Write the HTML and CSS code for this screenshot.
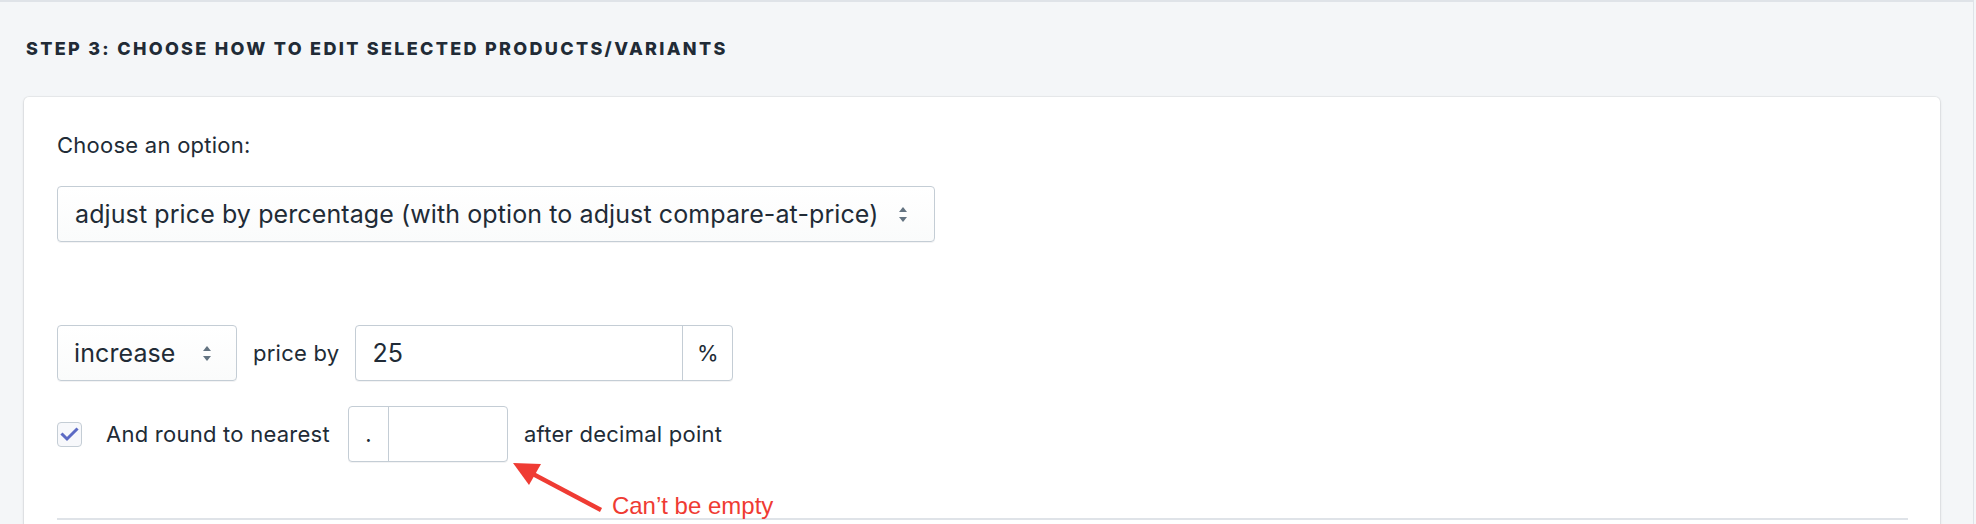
FILE: index.html
```html
<!DOCTYPE html>
<html lang="en">
<head>
<meta charset="utf-8">
<title>Step 3</title>
<link rel="stylesheet" href="styles.css">
</head>
<body>
<div class="page">
  <h2 class="step-title">STEP 3: CHOOSE HOW TO EDIT SELECTED PRODUCTS/VARIANTS</h2>
  <section class="card">
    <label class="field-label">Choose an option:</label>
    <div class="select select-wide">
      <span class="select-text">adjust price by percentage (with option to adjust compare-at-price)</span>
      <svg class="select-arrows" width="8" height="15" viewBox="0 0 8 15"><polygon points="0,5 4,0 8,5"/><polygon points="0,10 8,10 4,15"/></svg>
    </div>

    <div class="row row-price">
      <div class="select select-small">
        <span class="select-text">increase</span>
        <svg class="select-arrows" width="8" height="15" viewBox="0 0 8 15"><polygon points="0,5 4,0 8,5"/><polygon points="0,10 8,10 4,15"/></svg>
      </div>
      <span class="inline-text">price by</span>
      <div class="input-group input-percent">
        <span class="input-value">25</span>
        <span class="addon addon-right">%</span>
      </div>
    </div>

    <div class="row row-round">
      <span class="checkbox">
        <svg width="25" height="25" viewBox="0 0 25 25"><polyline points="5.5,12.5 10,17 19.5,7.5" fill="none" stroke="#5c6ac4" stroke-width="3" stroke-linecap="square"/></svg>
      </span>
      <span class="inline-text">And round to nearest</span>
      <div class="round-wrap">
        <div class="input-group input-round">
          <span class="addon addon-left">.</span>
          <span class="input-value"></span>
        </div>
        <svg class="annot-arrow" width="100" height="60" viewBox="0 0 100 60">
          <line x1="25" y1="18" x2="93" y2="54" stroke="#ef3b33" stroke-width="4.5"/>
          <polygon points="5,7 33,8 21,29" fill="#ef3b33"/>
        </svg>
        <span class="annot-text">Can’t be empty</span>
      </div>
      <span class="inline-text">after decimal point</span>
    </div>

    <hr class="divider">
  </section>
</div>
</body>
</html>
```

FILE: styles.css
```css
* { box-sizing: border-box; }

html, body {
  margin: 0;
  padding: 0;
  background: #f4f6f8;
}

body {
  font-family: Inter, "Noto Sans", "Liberation Sans", sans-serif;
  color: #212b36;
  overflow: hidden;
}

.page {
  width: 1974px;
  min-height: 600px;
  border-top: 2px solid #dfe3e8;
  border-right: 1px solid #dfe3e8;
  padding: 35px 33px 0 24px;
}

.step-title {
  margin: 0 0 36px 2px;
  font-size: 18px;
  line-height: 24px;
  font-weight: 800;
  letter-spacing: 2.3px;
  color: #212b36;
}

.card {
  background: #fff;
  border-radius: 5px;
  box-shadow: 0 0 0 1px rgba(63, 63, 68, 0.05), 0 1px 3px 0 rgba(63, 63, 68, 0.18);
  padding: 32px 32px 200px 33px;
}

.field-label {
  display: block;
  font-size: 22px;
  line-height: 32px;
  letter-spacing: 0.25px;
  margin-bottom: 25px;
}

.select {
  display: flex;
  align-items: center;
  justify-content: space-between;
  height: 56px;
  border: 1px solid #c4cdd5;
  border-radius: 4px;
  background: linear-gradient(#fff, #fafbfb);
  box-shadow: 0 1px 0 0 rgba(22, 29, 37, 0.05);
  font-size: 25px;
  line-height: 32px;
  letter-spacing: 0.1px;
}

.select-wide {
  width: 878px;
  padding: 0 27px 0 17px;
}

.select-small {
  width: 180px;
  padding: 0 25px 0 16px;
}

.select-arrows { fill: #637381; flex: none; }

.row {
  display: flex;
  align-items: center;
  font-size: 22px;
  line-height: 32px;
  letter-spacing: 0.25px;
}

.row-price {
  margin-top: 83px;
  gap: 16px;
}

.row-round {
  margin-top: 25px;
}

.inline-text { white-space: nowrap; }

.input-group {
  display: flex;
  height: 56px;
  border: 1px solid #c4cdd5;
  border-radius: 4px;
  background: #fff;
  box-shadow: 0 1px 0 0 rgba(22, 29, 37, 0.05);
  font-size: 25px;
  letter-spacing: 0;
}

.input-percent { width: 378px; }

.input-value {
  flex: 1;
  display: flex;
  align-items: center;
  padding-left: 16px;
}

.addon {
  display: flex;
  align-items: center;
  justify-content: center;
  flex: none;
}

.addon-right {
  width: 50px;
  border-left: 1px solid #c4cdd5;
  font-size: 22px;
}

.addon-left {
  width: 40px;
  border-right: 1px solid #c4cdd5;
  font-size: 22px;
}

.checkbox {
  width: 25px;
  height: 25px;
  border: 1px solid #c4cdd5;
  border-radius: 4px;
  background: #f7f8fb;
  display: flex;
  margin-right: 24px;
  flex: none;
}

.checkbox svg { margin: -1px; }

.round-wrap {
  position: relative;
  margin: 0 16px 0 18px;
}

.input-round { width: 160px; }

.annot-arrow {
  position: absolute;
  left: 160px;
  top: 50px;
}

.annot-text {
  position: absolute;
  left: 264px;
  top: 88px;
  font-family: "Liberation Sans", Arial, sans-serif;
  font-size: 24px;
  line-height: 24px;
  letter-spacing: 0;
  color: #ef3b33;
  white-space: nowrap;
}

.divider {
  margin: 56px 0 0;
  border: 0;
  height: 2px;
  background: #dfe3e8;
}
```
